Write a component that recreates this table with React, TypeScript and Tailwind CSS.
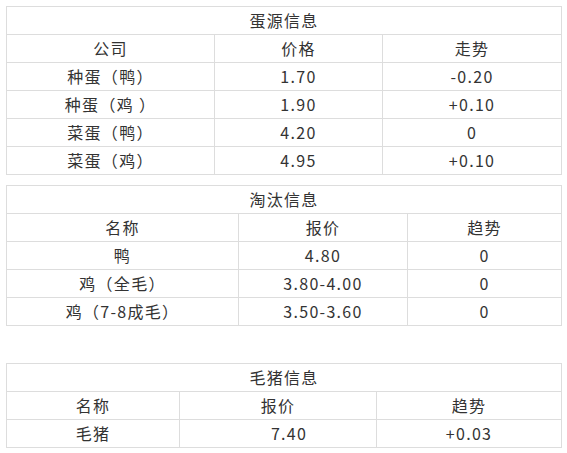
const font = { fontFamily: '"Microsoft YaHei", "Noto Sans CJK SC", sans-serif' };

type Table = {
  title: string;
  cols: number[];
  head: string[];
  rows: string[][];
};

const eggs: Table = {
  title: "蛋源信息",
  cols: [208, 168, 179],
  head: ["公司", "价格", "走势"],
  rows: [
    ["种蛋（鸭）", "1.70", "-0.20"],
    ["种蛋（鸡 ）", "1.90", "+0.10"],
    ["菜蛋（鸭）", "4.20", "0"],
    ["菜蛋（鸡）", "4.95", "+0.10"],
  ],
};

const culls: Table = {
  title: "淘汰信息",
  cols: [232, 169, 154],
  head: ["名称", "报价", "趋势"],
  rows: [
    ["鸭", "4.80", "0"],
    ["鸡（全毛）", "3.80-4.00", "0"],
    ["鸡（7-8成毛）", "3.50-3.60", "0"],
  ],
};

const hogs: Table = {
  title: "毛猪信息",
  cols: [173, 197, 185],
  head: ["名称", "报价", "趋势"],
  rows: [["毛猪", "\u3000 7.40", "+0.03"]],
};

function InfoTable({ data }: { data: Table }) {
  return (
    <table className="w-[556px] table-fixed border-collapse text-[16px] tracking-[1.3px] text-[#333]">
      <colgroup>
        {data.cols.map((w, i) => (
          <col key={i} style={{ width: w }} />
        ))}
      </colgroup>
      <tbody>
        <tr className="h-[28px]">
          <td colSpan={3} className="border border-[#dddddd] p-0 text-center leading-[27px]">
            {data.title}
          </td>
        </tr>
        {[data.head, ...data.rows].map((row, r) => (
          <tr key={r} className="h-[28px]">
            {row.map((cell, c) => (
              <td
                key={c}
                className="whitespace-pre border border-[#dddddd] p-0 text-center leading-[27px]"
              >
                {cell}
              </td>
            ))}
          </tr>
        ))}
      </tbody>
    </table>
  );
}

export default function App() {
  return (
    <div className="min-h-[453px] bg-white px-[6px] pt-[6px]" style={font}>
      <InfoTable data={eggs} />
      <div className="h-[10px]" />
      <InfoTable data={culls} />
      <div className="h-[37px]" />
      <InfoTable data={hogs} />
    </div>
  );
}
